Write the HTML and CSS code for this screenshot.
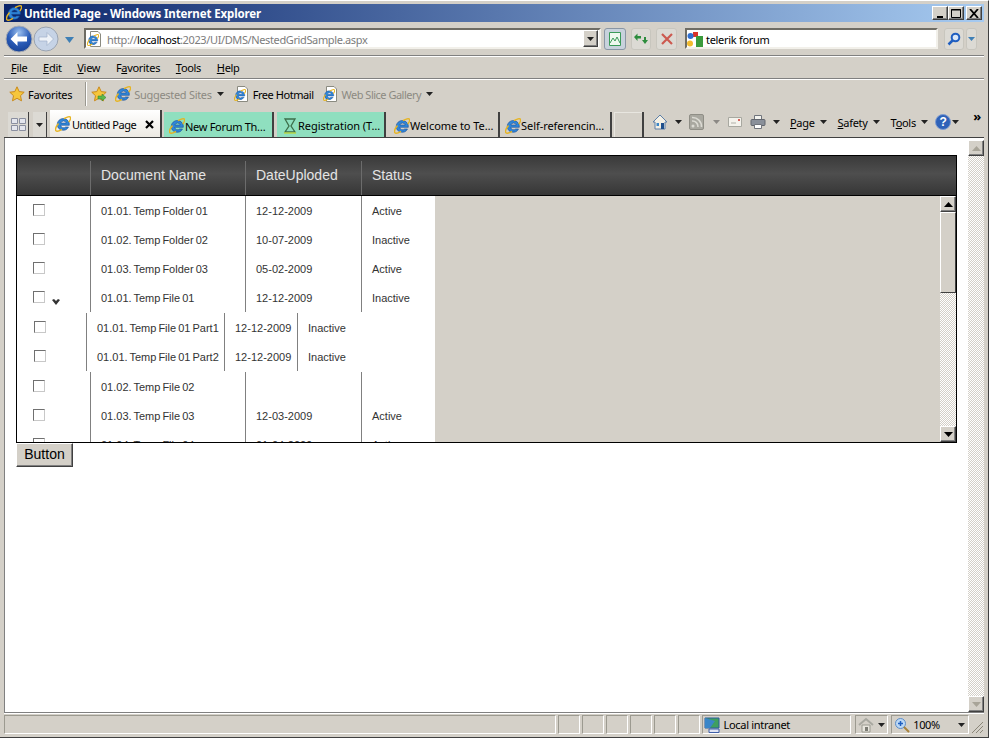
FILE: index.html
```html
<!DOCTYPE html>
<html lang="en">
<head>
    <meta charset="UTF-8">
    <title>Untitled Page - Windows Internet Explorer</title>
    <link rel="stylesheet" href="styles.css">
</head>
<body>
    <svg class="defs" width="0" height="0">
        <symbol id="ie" viewBox="0 0 16 16">
            <path d="M8.500 2.500a6 6 0 0 0-6.300 6A6 6 0 0 0 13.500 11H10.600a2.900 2.900 0 0 1-4.900-1.700h8.600A6 6 0 0 0 8.500 2.500zM5.800 7a2.900 2.900 0 0 1 5.500 0z" fill="#2f86d8" stroke="#174a96" stroke-width=".6"/>
            <path d="M3.500 7.500C1 10.500 0 13.500 1 14.800c1 1 3.500 0 6-1.500M9 2.700C12 .8 14.800 .2 15.400 1.200c.5 1-.2 3-1.600 5" fill="none" stroke="#e6b422" stroke-width="1.400"/>
        </symbol>
        <symbol id="page-e" viewBox="0 0 16 16">
            <path d="M3.500 .5H11L13.500 3V15.500H3.500z" fill="#fff" stroke="#8a8a80"/>
            <use href="#ie" x="0" y="3" width="12" height="12"/>
        </symbol>
        <symbol id="star" viewBox="0 0 16 16">
            <path d="M8 .8l2.200 4.800 5 .6-3.700 3.500 1 5.100L8 12.300l-4.500 2.500 1-5.100L.8 6.200l5-.6z" fill="#f6c63c" stroke="#c98a1c"/>
        </symbol>
        <symbol id="caret" viewBox="0 0 7 4">
            <path d="M0 0h7L3.500 4z" fill="#222"/>
        </symbol>
    </svg>

    <div class="titlebar">
        <svg class="icon16 title-icon"><use href="#ie"/></svg>
        <span class="title-text">Untitled Page - Windows Internet Explorer</span>
        <div class="win-buttons">
            <button class="win-btn"><svg width="9" height="9"><path d="M1 7h6v2H1z" fill="#000"/></svg></button>
            <button class="win-btn"><svg width="10" height="9"><path d="M.5 .5h9v8h-9zM0 1h10" fill="none" stroke="#000"/></svg></button>
            <button class="win-btn win-close"><svg width="10" height="9"><path d="M1 0l8 9M9 0L1 9" stroke="#000" stroke-width="1.800"/></svg></button>
        </div>
    </div>

    <div class="navbar">
        <svg class="nav-back" width="28" height="30" viewBox="0 0 28 30">
            <defs>
                <radialGradient id="blue" cx=".5" cy=".25" r=".85"><stop offset="0" stop-color="#9cc0ee"/><stop offset=".5" stop-color="#2a5cb8"/><stop offset="1" stop-color="#123a8c"/></radialGradient>
            </defs>
            <circle cx="14" cy="15" r="13" fill="url(#blue)" stroke="#a8acb4"/>
            <path d="M5.500 15l7-7v4.500H22v5h-9.500V22z" fill="#fff"/>
        </svg>
        <svg class="nav-forward" width="26" height="30" viewBox="0 0 26 30">
            <circle cx="13" cy="15" r="12" fill="#c6d3e6" stroke="#9aa3b0"/>
            <path d="M20.500 15l-6.500-6.500V13H6v4h8v4.500z" fill="#eef2f8" stroke="#9fb0c8" stroke-width=".7"/>
        </svg>
        <svg class="nav-drop" width="9" height="6"><path d="M0 0h9L4.500 6z" fill="#3f7fb5"/></svg>

        <div class="sunken address">
            <svg class="icon16 addr-icon"><use href="#page-e"/></svg>
            <span class="addr-text">http://<b>localhost</b>:2023/UI/DMS/NestedGridSample.aspx</span>
            <button class="win-btn addr-drop"><svg width="7" height="4"><use href="#caret"/></svg></button>
        </div>

        <button class="tool-btn tool-active">
            <svg width="16" height="16" viewBox="0 0 16 16"><path d="M2.500 1.500h11v13h-11z" fill="#eef8ee" stroke="#3a9a58"/><path d="M3 12l3-5 2 3 2-4 3 6" fill="none" stroke="#3a9a58"/></svg>
        </button>
        <button class="tool-btn tool-refresh">
            <svg width="16" height="16" viewBox="0 0 16 16"><path d="M1 6l3.500-3.500V5H8v2.500H4.500V10zM15 9l-3 4-3-4h2V6h2v3z" fill="#2c8c3c"/></svg>
        </button>
        <button class="tool-btn tool-stop">
            <svg width="14" height="14" viewBox="0 0 14 14"><path d="M2 2l10 10M12 2L2 12" stroke="#cc5a50" stroke-width="2.200"/></svg>
        </button>

        <div class="sunken search">
            <svg class="icon16 google" viewBox="0 0 16 16"><path d="M6 1h5v5H6z" fill="#d8322a"/><path d="M9 5h7v11H9z" fill="#3a9a3c"/><circle cx="3.500" cy="5" r="3" fill="#2f6fd0"/><circle cx="3" cy="12.500" r="3" fill="#f2bb2e"/></svg>
            <span class="search-text">telerik forum</span>
        </div>
        <button class="tool-btn search-btn">
            <svg width="14" height="14" viewBox="0 0 14 14"><circle cx="8.500" cy="5.500" r="3.800" fill="#dbe8f8" stroke="#1f5ec0" stroke-width="2"/><path d="M5.500 8.500L1.500 12.500" stroke="#1f5ec0" stroke-width="2.500"/></svg>
        </button>
        <button class="tool-btn search-drop"><svg width="7" height="4"><path d="M0 0h7L3.500 4z" fill="#3f7fb5"/></svg></button>
    </div>

    <div class="menubar">
        <span class="menu-item"><u>F</u>ile</span>
        <span class="menu-item"><u>E</u>dit</span>
        <span class="menu-item"><u>V</u>iew</span>
        <span class="menu-item">F<u>a</u>vorites</span>
        <span class="menu-item"><u>T</u>ools</span>
        <span class="menu-item"><u>H</u>elp</span>
    </div>

    <div class="favbar">
        <svg class="icon16"><use href="#star"/></svg>
        <span class="fav-label">Favorites</span>
        <span class="fav-divider"></span>
        <svg class="icon16" viewBox="0 0 16 16"><use href="#star"/><path d="M7 10h4V8l4 3.500L11 15v-2H7z" fill="#5cb84a" stroke="#2f7d2a" stroke-width=".5"/></svg>
        <div class="fav-link fav-suggested">
            <svg class="icon16"><use href="#ie"/></svg>
            <span class="muted">Suggested Sites</span>
            <svg class="caret"><use href="#caret"/></svg>
        </div>
        <div class="fav-link fav-hotmail">
            <svg class="icon16"><use href="#page-e"/></svg>
            <span>Free Hotmail</span>
        </div>
        <div class="fav-link fav-slice">
            <svg class="icon16"><use href="#page-e"/></svg>
            <span class="muted">Web Slice Gallery</span>
            <svg class="caret"><use href="#caret"/></svg>
        </div>
    </div>

    <div class="tabbar">
        <button class="quick-tabs">
            <svg width="17" height="15" viewBox="0 0 17 15"><path d="M1.500 1.500h6v5h-6zM9.500 1.500h6v5h-6zM1.500 8.500h6v5h-6zM9.500 8.500h6v5h-6z" fill="#e4e6ee" stroke="#8a8fa0"/></svg>
        </button>
        <button class="quick-drop"><svg class="caret"><use href="#caret"/></svg></button>
        <div class="tab tab-current">
            <svg class="icon16"><use href="#ie"/></svg>
            <span class="tab-name">Untitled Page</span>
            <svg class="tab-close" width="9" height="9"><path d="M1 1l7 7M8 1L1 8" stroke="#000" stroke-width="2.200"/></svg>
        </div>
        <div class="tab tab-green tab-low">
            <svg class="icon16"><use href="#ie"/></svg>
            <span class="tab-name">New Forum Th…</span>
        </div>
        <div class="tab tab-green tab-reg">
            <svg class="icon16" viewBox="0 0 16 16"><path d="M3 1h10L9 8l4 6H3l4-6z" fill="none" stroke="#3c6e4a" stroke-width="1.300"/><path d="M2 15h12" stroke="#b8d84a" stroke-width="1.500"/></svg>
            <span class="tab-name">Registration (T…</span>
        </div>
        <div class="tab tab-welcome">
            <svg class="icon16"><use href="#ie"/></svg>
            <span class="tab-name">Welcome to Te…</span>
        </div>
        <div class="tab tab-self">
            <svg class="icon16"><use href="#ie"/></svg>
            <span class="tab-name">Self-referencin…</span>
        </div>
        <div class="tab tab-new"></div>

        <div class="cmdbar">
            <svg class="icon16 cmd-home" viewBox="0 0 16 16"><path d="M8 1L1 8h2v7h10V8h2z" fill="#f3efe4" stroke="#5c7fa8"/><path d="M9 9h3v6H9z" fill="#1f4f8c"/><path d="M4.500 9h2.500v3H4.500z" fill="#3a86c8"/></svg>
            <svg class="caret"><use href="#caret"/></svg>
            <svg class="icon16 cmd-icon" viewBox="0 0 16 16"><rect x=".5" y=".5" width="14" height="15" rx="1.500" fill="#a9a8a0" stroke="#8f8e86"/><path d="M3 7a5.500 5.500 0 0 1 6 6M3 3.500a9 9 0 0 1 9.500 9.500" fill="none" stroke="#dcdbd4" stroke-width="1.600"/><circle cx="4" cy="12" r="1.500" fill="#dcdbd4"/></svg>
            <svg class="caret caret-off"><use href="#caret"/></svg>
            <svg class="icon16 cmd-icon" viewBox="0 0 16 16"><path d="M1.500 3.500h13v9h-13z" fill="#f4f2ec" stroke="#a8a8a0"/><path d="M11 5h2v2h-2z" fill="#d8645c"/><path d="M4 9h5" stroke="#b0b0a8"/></svg>
            <svg class="icon16 cmd-icon" viewBox="0 0 16 16"><path d="M4.500 1.500h7v4h-7z" fill="#f4f4f0" stroke="#70747c"/><rect x="1" y="5.500" width="14" height="6" rx="1" fill="#8a909a" stroke="#62666e"/><path d="M4.500 10.500h7v4h-7z" fill="#fff" stroke="#70747c"/></svg>
            <svg class="caret"><use href="#caret"/></svg>
            <span class="cmd-item cmd-page"><u>P</u>age</span>
            <svg class="caret"><use href="#caret"/></svg>
            <span class="cmd-item"><u>S</u>afety</span>
            <svg class="caret"><use href="#caret"/></svg>
            <span class="cmd-item">T<u>o</u>ols</span>
            <svg class="caret"><use href="#caret"/></svg>
            <svg class="icon16 cmd-icon" viewBox="0 0 16 16"><circle cx="8" cy="8" r="7.500" fill="#2f62b8" stroke="#7d9bd0"/><text x="8" y="12" text-anchor="middle" class="help-mark">?</text></svg>
            <svg class="caret caret-help"><use href="#caret"/></svg>
            <span class="chevron">»</span>
        </div>
    </div>

    <div class="viewport">
        <div class="page">
            <div class="grid">
                <div class="grid-head">
                    <div class="th th-check"></div>
                    <div class="th th-name">Document Name</div>
                    <div class="th th-date">DateUploded</div>
                    <div class="th th-status">Status</div>
                </div>
                <div class="grid-scroll">
                    <div class="grid-body">
                        <div class="row">
                            <div class="td td-check"><span class="check"></span></div>
                            <div class="td td-name">01.01. Temp Folder 01</div>
                            <div class="td td-date">12-12-2009</div>
                            <div class="td td-status">Active</div>
                        </div>
                        <div class="row">
                            <div class="td td-check"><span class="check"></span></div>
                            <div class="td td-name">01.02. Temp Folder 02</div>
                            <div class="td td-date">10-07-2009</div>
                            <div class="td td-status">Inactive</div>
                        </div>
                        <div class="row">
                            <div class="td td-check"><span class="check"></span></div>
                            <div class="td td-name">01.03. Temp Folder 03</div>
                            <div class="td td-date">05-02-2009</div>
                            <div class="td td-status">Active</div>
                        </div>
                        <div class="row">
                            <div class="td td-check">
                                <span class="check"></span>
                                <svg class="expander" width="8" height="6" viewBox="0 0 8 6"><path d="M0 1l2-1 2 2 2-2 2 1-4 5z" fill="#333"/></svg>
                            </div>
                            <div class="td td-name">01.01. Temp File 01</div>
                            <div class="td td-date">12-12-2009</div>
                            <div class="td td-status">Inactive</div>
                        </div>
                        <div class="nested">
                            <div class="row">
                                <div class="td sub-check"><span class="check"></span></div>
                                <div class="td sub-name">01.01. Temp File 01 Part1</div>
                                <div class="td sub-date">12-12-2009</div>
                                <div class="td sub-status">Inactive</div>
                            </div>
                            <div class="row">
                                <div class="td sub-check"><span class="check"></span></div>
                                <div class="td sub-name">01.01. Temp File 01 Part2</div>
                                <div class="td sub-date">12-12-2009</div>
                                <div class="td sub-status">Inactive</div>
                            </div>
                        </div>
                        <div class="row">
                            <div class="td td-check"><span class="check"></span></div>
                            <div class="td td-name">01.02. Temp File 02</div>
                            <div class="td td-date"></div>
                            <div class="td td-status"></div>
                        </div>
                        <div class="row">
                            <div class="td td-check"><span class="check"></span></div>
                            <div class="td td-name">01.03. Temp File 03</div>
                            <div class="td td-date">12-03-2009</div>
                            <div class="td td-status">Active</div>
                        </div>
                        <div class="row">
                            <div class="td td-check"><span class="check"></span></div>
                            <div class="td td-name">01.04. Temp File 04</div>
                            <div class="td td-date">01-04-2009</div>
                            <div class="td td-status">Active</div>
                        </div>
                    </div>
                    <div class="grid-fill"></div>
                    <div class="scrollbar inner-bar">
                        <button class="win-btn sb-btn"><svg width="9" height="5"><path d="M0 5h9L4.500 0z" fill="#000"/></svg></button>
                        <div class="sb-track"><div class="sb-thumb"></div></div>
                        <button class="win-btn sb-btn"><svg width="9" height="5"><path d="M0 0h9L4.500 5z" fill="#000"/></svg></button>
                    </div>
                </div>
            </div>
            <button class="page-btn">Button</button>
        </div>
        <div class="scrollbar page-bar">
            <button class="win-btn sb-btn"><svg width="9" height="5"><path d="M0 5h9L4.500 0z" fill="#a8a498"/></svg></button>
            <div class="sb-track"></div>
            <button class="win-btn sb-btn"><svg width="9" height="5"><path d="M0 0h9L4.500 5z" fill="#a8a498"/></svg></button>
        </div>
    </div>

    <div class="statusbar">
        <div class="panel panel-main"></div>
        <div class="panel panel-small"></div>
        <div class="panel panel-small"></div>
        <div class="panel panel-small"></div>
        <div class="panel panel-small"></div>
        <div class="panel panel-small"></div>
        <div class="panel panel-small"></div>
        <div class="panel panel-zone">
            <svg class="icon16" viewBox="0 0 16 16"><path d="M1 1h14v10H1z" fill="#3f9f5f" stroke="#2a5c9c"/><path d="M1 1l10 3-5 7H1z" fill="#3a86c8"/><path d="M5 12h10v3.500H5z" fill="#dfe4f4" stroke="#3f5fa8"/></svg>
            <span>Local intranet</span>
        </div>
        <div class="panel panel-lock">
            <svg class="icon16" viewBox="0 0 16 16"><path d="M1 8l7-6 7 6" fill="none" stroke="#a8a8a0" stroke-width="2"/><path d="M4 8h8v7H4z" fill="#e8e6de" stroke="#9a9a90"/><path d="M7 10h3v4H7z" fill="#7c7c74"/></svg>
            <svg class="caret"><use href="#caret"/></svg>
        </div>
        <div class="panel panel-zoom">
            <svg class="icon16" viewBox="0 0 16 16"><circle cx="6.500" cy="6.500" r="5" fill="#bcd8f4" stroke="#5c8cc8"/><path d="M4 6.500h5M6.500 4v5" stroke="#1f5ec0" stroke-width="1.500"/><path d="M10 10l5 5" stroke="#a8823c" stroke-width="2"/></svg>
            <span>100%</span>
            <svg class="caret caret-zoom"><use href="#caret"/></svg>
        </div>
        <svg class="grip" width="13" height="13"><path d="M12 1L1 12M12 5L5 12M12 9L9 12" stroke="#8a8678" stroke-width="1"/></svg>
    </div>
</body>
</html>
```

FILE: styles.css
```css
* {
    box-sizing: border-box;
}
html, body {
    height: 100%;
}
body {
    margin: 0;
    padding: 4px 4px 2px;
    height: 738px;
    overflow: hidden;
    display: flex;
    flex-direction: column;
    background-color: #d4d0c8;
    font-family: "Noto Sans", Arial, sans-serif;
    font-size: 11px;
    letter-spacing: -.3px;
    color: #000;
    border-top: 1px solid #fff;
    border-bottom: 1px solid #404040;
    border-right: 1px solid #404040;
}
.defs {
    position: absolute;
}
button {
    padding: 0;
    font-family: inherit;
}
svg {
    display: block;
    flex: none;
}
.icon16 {
    width: 16px;
    height: 16px;
}
.caret {
    width: 7px;
    height: 4px;
}
.muted {
    color: #8c8a82;
}

.titlebar {
    height: 18px;
    margin-top: -1px;
    flex: none;
    display: flex;
    align-items: center;
    padding: 0 2px;
    background: linear-gradient(to right, #0a246a, #a6caf0);
    color: #fff;
    font-weight: bold;
    font-size: 11.500px;
    letter-spacing: -.12px;
}
.title-text {
    margin-left: 2px;
}
.win-buttons {
    margin-left: auto;
    display: flex;
}
.win-btn {
    display: flex;
    align-items: center;
    justify-content: center;
    background-color: #d4d0c8;
    border: 1px solid;
    border-color: #fff #404040 #404040 #fff;
    box-shadow: inset -1px -1px 0 #808080;
}
.win-buttons .win-btn {
    width: 16px;
    height: 14px;
}
.win-close {
    margin-left: 2px;
}

.navbar {
    height: 34px;
    flex: none;
    display: flex;
    align-items: center;
    border-bottom: 1px solid #808080;
    box-shadow: 0 1px 0 #fff;
}
.nav-back {
    margin-left: 1px;
}
.nav-drop {
    margin: 2px 0 0 6px;
}
.sunken {
    height: 21px;
    display: flex;
    align-items: center;
    background-color: #fff;
    border: 2px solid;
    border-color: #6e6c64 #f2f0ea #f2f0ea #6e6c64;
}
.address {
    width: 517px;
    margin-left: 10px;
}
.addr-icon {
    margin-left: 1px;
}
.addr-text {
    margin-left: 4px;
    padding-top: 2px;
    letter-spacing: -.38px;
    color: #7c7c7c;
}
.addr-text b {
    font-weight: normal;
    color: #000;
}
.addr-drop {
    margin-left: auto;
    margin-right: 1px;
    width: 15px;
    height: 17px;
}
.tool-btn {
    width: 20px;
    height: 22px;
    margin-left: 5px;
    display: flex;
    align-items: center;
    justify-content: center;
    background-color: #dcdad4;
    border: 1px solid #c8c6be;
    border-radius: 3px;
}
.tool-active {
    width: 22px;
    margin-left: 3px;
    background-color: #c8d2dc;
    border-color: #8a96a4;
}
.tool-stop {
    width: 21px;
}
.search {
    width: 253px;
    margin-left: 8px;
}
.search-text {
    margin-left: 3px;
    padding-top: 2px;
}
.search-btn {
    margin-left: 6px;
}
.search-drop {
    width: 11px;
    margin-left: 2px;
}

.menubar {
    height: 23px;
    flex: none;
    display: flex;
    align-items: center;
    padding-left: 7px;
    gap: 15.700px;
    border-bottom: 1px solid #808080;
    box-shadow: 0 1px 0 #fff;
}

.favbar {
    height: 30px;
    flex: none;
    display: flex;
    align-items: center;
    padding-left: 5px;
}
.fav-label {
    margin-left: 3px;
}
.fav-divider {
    width: 2px;
    height: 24px;
    margin: 0 4px 0 13px;
    border-left: 1px solid #9a9890;
    background-color: #fff;
}
.fav-link {
    display: flex;
    align-items: center;
    gap: 3px;
}
.fav-link .caret {
    margin-left: 2px;
}
.fav-suggested {
    margin-left: 8px;
}
.fav-hotmail {
    margin-left: 10px;
    letter-spacing: -.45px;
}
.fav-slice {
    margin-left: 9px;
    letter-spacing: -.5px;
}

.tabbar {
    height: 29px;
    flex: none;
    display: flex;
    align-items: flex-end;
    padding-left: 4px;
    border-bottom: 1px solid #404040;
}
.quick-tabs,
.quick-drop {
    height: 25px;
    display: flex;
    align-items: center;
    justify-content: center;
    background-color: #dcdad4;
    border: 0;
    border-right: 1px solid #404040;
}
.quick-tabs {
    width: 21px;
}
.quick-drop {
    width: 14px;
    margin-left: 4px;
}
.tab {
    height: 25px;
    display: flex;
    align-items: center;
    padding: 2px 0 0 5px;
    margin-left: 3px;
    background-color: #d4d0c8;
    border-right: 2px solid #404040;
    white-space: nowrap;
    letter-spacing: -.05px;
}
.tab-current {
    width: 112px;
    height: 27px;
    padding: 1px 0 0 5px;
    gap: 1px;
    letter-spacing: -.45px;
    background: linear-gradient(to bottom, #fff, #ece9e2);
}
.tab-close {
    margin-left: 8px;
}
.tab-green {
    background-color: #8fdfbf;
}
.tab-low {
    width: 110px;
    margin-left: 2px;
    letter-spacing: -.3px;
}
.tab-low .tab-name {
    padding-top: 2px;
}
.tab-reg {
    width: 109px;
    margin-left: 3px;
}
.tab-welcome {
    width: 111px;
    margin-left: 3px;
}
.tab-self {
    width: 112px;
    margin-left: 0;
}
.tab-new {
    width: 30px;
    margin-left: 2px;
    box-shadow: inset 1px 1px 0 #e8e6e0;
}
.cmdbar {
    height: 27px;
    padding: 0 0 3px 8px;
    flex: 1;
    display: flex;
    align-items: center;
    position: relative;
}
.cmdbar .caret {
    margin-left: 7px;
}
.cmd-icon {
    margin-left: 7px;
}
.cmdbar .caret-off {
    margin-left: 8px;
    opacity: .4;
}
.cmd-item {
    margin-left: 11px;
}
.cmd-page {
    margin-left: 10px;
}
.cmdbar .cmd-item + .caret {
    margin-left: 5px;
}
.cmdbar .caret-help {
    margin-left: 1px;
}
.help-mark {
    font-family: "Liberation Sans", sans-serif;
    font-size: 12px;
    font-weight: bold;
    fill: #fff;
}
.chevron {
    position: absolute;
    right: 3px;
    top: -3px;
    font-size: 13px;
    font-weight: bold;
}

.viewport {
    flex: 1;
    min-height: 0;
    display: flex;
    background-color: #fff;
    border-left: 1px solid #808080;
}
.page {
    flex: 1;
    padding: 17px 11px 0;
    font-family: "Liberation Sans", Arial, sans-serif;
    letter-spacing: normal;
}
.scrollbar {
    width: 16px;
    flex: none;
    display: flex;
    flex-direction: column;
}
.page-bar {
    margin-top: 2px;
}
.sb-btn {
    width: 16px;
    height: 16px;
    flex: none;
}
.sb-track {
    flex: 1;
    background: repeating-conic-gradient(#d4d0c8 0 25%, #fff 0 50%) 0 0 / 2px 2px;
}
.sb-thumb {
    height: 81px;
    background-color: #d4d0c8;
    border: 1px solid;
    border-color: #fff #404040 #404040 #fff;
}

.grid {
    width: 941px;
    border: 1px solid #000;
}
.grid-head {
    height: 40px;
    display: flex;
    padding-top: 5px;
    background: linear-gradient(to bottom, #3a3a3a, #4e4e4e 45%, #363636);
    border-bottom: 1px solid #000;
    font-size: 14px;
    color: #e4e4e4;
}
.th {
    height: 34px;
    padding: 6px 10px 0;
    border-left: 1px solid #6c6c6c;
}
.th-check {
    width: 73px;
    border-left: 0;
}
.th-name {
    width: 155px;
}
.th-date {
    width: 116px;
}
.grid-scroll {
    height: 246px;
    display: flex;
    overflow: hidden;
}
.grid-body {
    width: 418px;
    flex: none;
    font-size: 11px;
    color: #333;
}
.grid-fill {
    flex: 1;
    background-color: #d4d0c8;
}
.row {
    height: 29px;
    display: flex;
}
.td {
    padding: 0 10px;
    display: flex;
    align-items: center;
    border-left: 1px solid #808080;
    white-space: nowrap;
}
.td-check {
    width: 73px;
    border-left: 0;
    padding: 0 0 2px 16px;
}
.td-name {
    width: 155px;
    word-spacing: -1px;
}
.td-date {
    width: 116px;
}
.td-status {
    width: 74px;
}
.check {
    width: 12px;
    height: 12px;
    flex: none;
    background-color: #fff;
    border: 1px solid;
    border-color: #707070 #c8c8c8 #c8c8c8 #707070;
}
.expander {
    margin: 10px 0 0 7px;
}
.nested {
    padding: 1px 0;
}
.sub-check {
    width: 69px;
    border-left: 0;
    padding: 0 0 2px 17px;
}
.sub-name {
    width: 138px;
    padding-right: 0;
    word-spacing: -1px;
}
.sub-date {
    width: 73px;
}
.sub-status {
    width: 74px;
}
.page-btn {
    display: block;
    width: 57px;
    height: 24px;
    padding-bottom: 2px;
    background-color: #d4d0c8;
    border: 1px solid;
    border-color: #fff #404040 #404040 #fff;
    box-shadow: inset -1px -1px 0 #808080;
    font-size: 14px;
    font-family: "Liberation Sans", Arial, sans-serif;
}

.statusbar {
    height: 23px;
    flex: none;
    display: flex;
    align-items: center;
    gap: 2px;
    border-top: 1px solid #808080;
    box-shadow: inset 0 1px 0 #fff;
    padding-top: 1px;
}
.panel {
    height: 19px;
    display: flex;
    align-items: center;
    border: 1px solid;
    border-color: #9c9a90 #fff #fff #9c9a90;
}
.panel-main {
    width: 553px;
}
.panel-small {
    width: 22px;
}
.panel-zone {
    width: 150px;
    gap: 4px;
    padding-left: 1px;
}
.panel-lock {
    width: 33px;
    margin-left: 2px;
    gap: 4px;
    padding-left: 2px;
}
.panel-zoom {
    width: 78px;
    margin-left: 1px;
    gap: 3px;
    padding-left: 2px;
}
.caret-zoom {
    margin-left: 15px;
}
.grip {
    margin-left: auto;
    margin-top: 5px;
}
```
